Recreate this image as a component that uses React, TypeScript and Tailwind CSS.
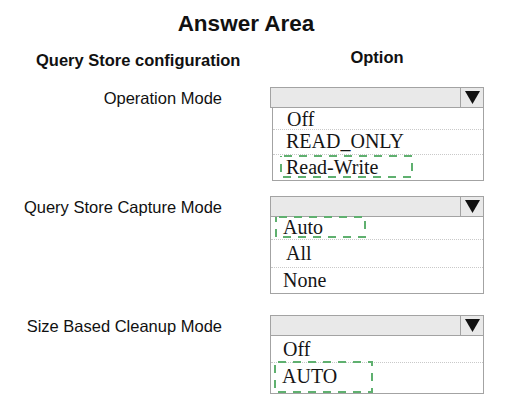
import React from "react";

type Row = { text: string; h: number; pt: number; pl: number; box?: { l: number; t: number; w: number; h: number } };

function DashBox({ l, t, w, h }: { l: number; t: number; w: number; h: number }) {
  return (
    <svg className="pointer-events-none absolute" style={{ left: l, top: t }} width={w} height={h}>
      <rect
        x="1"
        y="1"
        width={w - 2}
        height={h - 2}
        fill="none"
        stroke="#5fb06f"
        strokeWidth="2"
        strokeDasharray="8 7"
        strokeDashoffset="-3"
      />
    </svg>
  );
}

function Dropdown({ rows, inset }: { rows: Row[]; inset?: boolean }) {
  return (
    <div className="w-[214px]">
      <div className="flex h-[21px] border border-[#a3a3a3] bg-[#e9e9e9]">
        <div className="flex-1" />
        <div className="flex w-[23px] items-center justify-center border-l border-[#a3a3a3]">
          <svg width="15" height="13" viewBox="0 0 15 13">
            <polygon points="0,0 15,0 7.5,13" fill="#111" />
          </svg>
        </div>
      </div>
      <div className={`${inset ? "ml-[2px]" : ""} border-x border-b border-[#a3a3a3] bg-white`}>
        {rows.map((r, i) => (
          <div
            key={i}
            className={`relative ${i > 0 ? "border-t border-dotted border-[#c9c9c9]" : ""}`}
            style={{ height: r.h, paddingTop: r.pt, paddingLeft: r.pl }}
          >
            <span className="block text-[20px] leading-[20px] text-[#151515] [font-family:'Liberation_Serif',serif]">
              {r.text}
            </span>
            {r.box && <DashBox {...r.box} />}
          </div>
        ))}
      </div>
    </div>
  );
}

function Section({ label, rows, inset, mt }: { label: string; rows: Row[]; inset?: boolean; mt: string }) {
  return (
    <div className={`flex ${mt}`}>
      <div className="w-[222px] pt-[1px] text-right text-[16.5px] leading-[20px] text-[#111]">{label}</div>
      <div className="ml-[48px]">
        <Dropdown rows={rows} inset={inset} />
      </div>
    </div>
  );
}

export default function App() {
  return (
    <div className="h-[419px] w-[508px] overflow-hidden bg-white [font-family:'Liberation_Sans',Arial,sans-serif]">
      <div className="flex justify-center pr-[16px] pt-[10px]">
        <div className="text-[22.5px] font-bold leading-[28px] text-[#111]">Answer Area</div>
      </div>
      <div className="mt-[9px] flex h-[20px] items-start">
        <div className="w-[270px] pl-[36px] pt-[3px] text-[16.5px] font-bold leading-[20px] text-[#111]">
          Query Store configuration
        </div>
        <div className="w-[214px] text-center text-[16.5px] font-bold leading-[20px] text-[#111]">Option</div>
      </div>
      <Section
        label="Operation Mode"
        inset
        mt="mt-[20px]"
        rows={[
          { text: "Off", h: 21, pt: 1, pl: 14 },
          { text: "READ_ONLY", h: 25, pt: 1, pl: 13 },
          { text: "Read-Write", h: 26, pt: 2, pl: 13, box: { l: 7, t: 0, w: 133, h: 23 } },
        ]}
      />
      <Section
        label="Query Store Capture Mode"
        mt="mt-[15px]"
        rows={[
          { text: "Auto", h: 22, pt: 0, pl: 12, box: { l: 4, t: -1, w: 91, h: 22 } },
          { text: "All", h: 28, pt: 3, pl: 15 },
          { text: "None", h: 26, pt: 2, pl: 12 },
        ]}
      />
      <Section
        label="Size Based Cleanup Mode"
        mt="mt-[21px]"
        rows={[
          { text: "Off", h: 26, pt: 3, pl: 12 },
          { text: "AUTO", h: 31, pt: 3, pl: 11, box: { l: 3, t: -2, w: 99, h: 32 } },
        ]}
      />
    </div>
  );
}
